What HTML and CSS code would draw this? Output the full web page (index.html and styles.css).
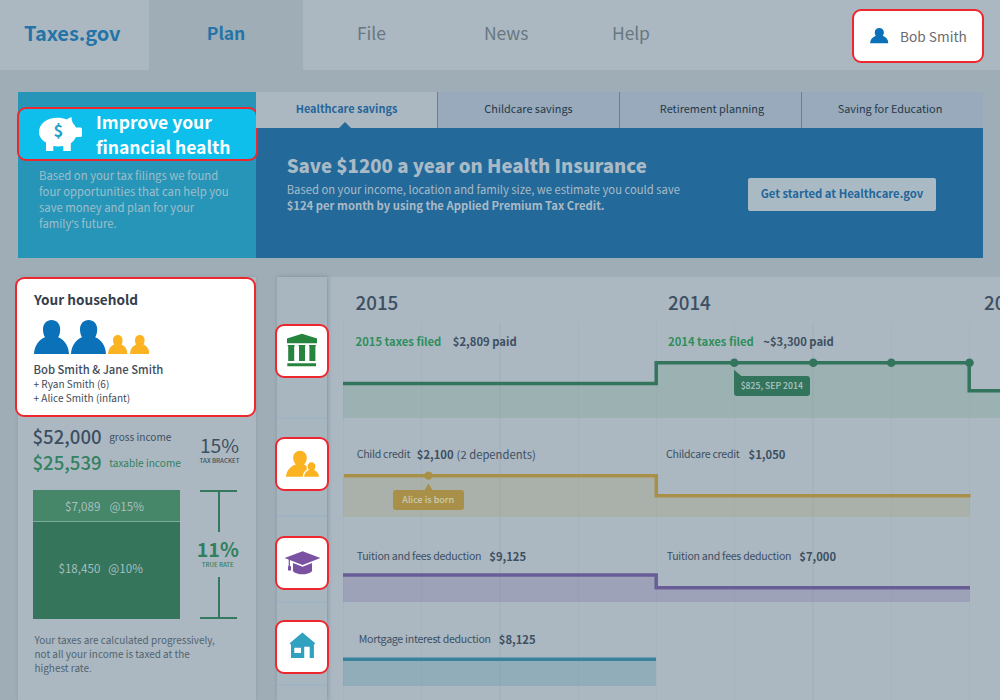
FILE: index.html
```html
<!DOCTYPE html>
<html lang="en">
<head>
<meta charset="utf-8">
<title>Taxes.gov</title>
<link rel="stylesheet" href="styles.css">
</head>
<body>
<svg class="defs" width="0" height="0">
  <symbol id="person" viewBox="0 0 35 34" preserveAspectRatio="none">
    <path d="M17.6 0C22.6 0 26.2 3.8 26.2 9.2C26.2 12.600 25.400 15.200 24.200 17.200C30.400 19.800 34.600 25.600 35 34H0C.4 25.600 4.800 19.800 11 17.200C9.800 15.200 9 12.600 9 9.200C9 3.800 12.600 0 17.600 0Z"/>
  </symbol>
</svg>

<header class="top">
  <div class="logo">Taxes.gov</div>
  <nav class="nav">
    <a class="nav-plan">Plan</a>
    <a class="nav-file">File</a>
    <a class="nav-news">News</a>
    <a class="nav-help">Help</a>
  </nav>
  <div class="mark user">
    <svg class="user-icon"><use href="#person"/></svg>
    <span>Bob Smith</span>
  </div>
</header>

<section class="banner">
  <div class="promo">
    <div class="mark promo-title">
      <svg width="43" height="34" viewBox="0 0 43 34">
        <path fill="#fff" d="M0 15C0 6.500 8 .8 18.500 .8C22 .8 25 1.300 27.700 2.500C29 1.600 30.800 .6 32.400 0C32.700 2.200 33 4.200 33.800 6C35.200 7.400 36.300 8.900 37 10.500H41.500Q43 10.500 43 12V18.500Q43 20 41.500 20H37C35.800 22.600 34 24.600 31.800 26.200V34H24.300V29C20.500 29.600 17.500 29.600 14.300 29V34H7V25.500C2.500 23 0 19.400 0 15Z"/>
        <text class="pig-sign" x="19.300" y="20" text-anchor="middle">$</text>
      </svg>
      <h1>Improve your<br>financial health</h1>
    </div>
    <p>Based on your tax filings we found<br>four opportunities that can help you<br>save money and plan for your<br>family<span class="apos">’</span>s future.</p>
  </div>
  <div class="offers">
    <div class="tabs">
      <div class="tab active">Healthcare savings</div>
      <div class="tab">Childcare savings</div>
      <div class="tab tab-retire">Retirement planning</div>
      <div class="tab">Saving for Education</div>
    </div>
    <div class="offer">
      <div>
        <h2>Save $1200 a year on Health Insurance</h2>
        <p>Based on your income, location and family size, we estimate you could save</p>
        <p><b>$124 per month by using the Applied Premium Tax Credit.</b></p>
      </div>
      <a class="cta">Get started at Healthcare.gov</a>
    </div>
  </div>
</section>

<main class="main">
  <aside class="side">
    <div class="mark household">
      <h3>Your household</h3>
      <div class="family">
        <svg class="adult"><use href="#person"/></svg>
        <svg class="adult"><use href="#person"/></svg>
        <svg class="kid"><use href="#person"/></svg>
        <svg class="kid"><use href="#person"/></svg>
      </div>
      <p class="names">Bob Smith &amp; Jane Smith</p>
      <p>+ Ryan Smith (6)</p>
      <p>+ Alice Smith (infant)</p>
    </div>
    <div class="income">
      <div class="sums">
        <div class="sum"><strong>$52,000</strong><span>gross income</span></div>
        <div class="sum taxable"><strong>$25,539</strong><span>taxable income</span></div>
      </div>
      <div class="rate"><div class="pct">15%</div><div class="cap">TAX BRACKET</div></div>
    </div>
    <div class="breakdown">
      <div class="bars">
        <div class="bar upper"><span>$7,089</span><span>@15%</span></div>
        <div class="bar lower"><span>$18,450</span><span>@10%</span></div>
      </div>
      <div class="true-rate">
        <div class="tee tee-top"></div>
        <div class="true-label"><div class="pct">11%</div><div class="cap">TRUE RATE</div></div>
        <div class="tee tee-bottom"></div>
      </div>
    </div>
    <p class="note">Your taxes are calculated progressively,<br>not all your income is taxed at the<br>highest rate.</p>
  </aside>

  <section class="timeline">
    <div class="rail">
      <div class="slot slot-tax"><div class="mark tile">
        <svg viewBox="0 0 50 50" fill="#26843e"><path d="M25 7.800L40 12.600V17.300H10V12.600ZM11.200 19H17.200V35H11.200ZM22 19H28V35H22ZM32.400 19H38.400V35H32.400ZM10.300 37.200H39V40.300H10.300Z"/><path d="M10.700 19H17.600V20.200H10.700ZM21.600 19H28.400V20.200H21.600ZM32 19H38.800V20.200H32Z"/></svg>
      </div></div>
      <div class="slot slot-child"><div class="mark tile">
        <svg viewBox="0 0 50 50" fill="#fcb322"><path d="M23 11.800C27 11.800 29.800 14.800 29.800 19C29.800 21.800 28.600 24 27 25.600C28.400 26.200 29.200 26.600 30 27.200L32 31L27 37.800H9C9.400 32 12.800 27.400 18.800 25.400C17.200 23.800 16.200 21.600 16.200 19C16.200 14.800 19 11.800 23 11.800Z"/><path stroke="#fff" stroke-width="2.400" paint-order="stroke" d="M34.500 23.200C36.800 23.200 38.400 25 38.400 27.300C38.400 28.800 37.900 30 37 31C39.800 32 41.800 34.400 42 37.800H27C27.200 34.400 29.200 32 32 31C31.100 30 30.600 28.800 30.600 27.300C30.600 25 32.200 23.200 34.500 23.200Z"/><path fill="#fff" d="M8 37.900H43V40H8Z"/></svg>
      </div></div>
      <div class="slot slot-study"><div class="mark tile">
        <svg viewBox="0 0 50 50" fill="#7a52a1"><path d="M25.600 13.200L43.400 20L25.600 27L7.600 20Z"/><path d="M16 25L25.600 28.800L35 25V33.200C32.800 35.400 29.200 36.300 25.500 36.300S18.200 35.400 16 33.200Z"/><path d="M11.700 20.800H12.900V27.400C13.800 27.900 14 28.500 14 29.300V32.400H11V29.300C11 28.500 11.200 27.900 11.700 27.400Z"/></svg>
      </div></div>
      <div class="slot slot-home"><div class="mark tile">
        <svg viewBox="0 0 50 50" fill="#31a1c0"><path fill-rule="evenodd" d="M25.400 10.600L38.200 21.200L37.400 22.400H36.900V36H32.700V24.800H27.200V36H14V22.400H13.600L12.700 21.200ZM17.300 25.700V31H24V25.700Z"/></svg>
      </div></div>
    </div>

    <div class="chart">
      <div class="years"><span>2015</span><span>2014</span><span>2013</span></div>
      <div class="track track-tax">
        <div class="labels">
          <div><b class="filed">2015 taxes filed</b><b>$2,809 paid</b></div>
          <div><b class="filed">2014 taxes filed</b><b>~$3,300 paid</b></div>
        </div>
        <svg class="plot" width="657" height="63" viewBox="343 355 657 63">
          <path fill="#3a8a50" fill-opacity=".13" d="M343 383.600H656V362.700H969V390.600H1000V418H343Z"/>
          <path class="line" stroke="#33755c" d="M343 383.600H656.200V362.700H969.200V390.700H1000"/>
          <g fill="#33755c"><circle cx="734.300" cy="362.700" r="4.300"/><circle cx="813.300" cy="362.700" r="4.300"/><circle cx="891.300" cy="362.700" r="4.300"/><circle cx="969.500" cy="362.700" r="4.300"/><path d="M734 369.800L742.500 377H734Z"/></g>
        </svg>
        <div class="tip tip-paid">$825, SEP 2014</div>
      </div>
      <div class="track track-child">
        <div class="labels">
          <div><span>Child credit</span><b>$2,100</b><i>(2 dependents)</i></div>
          <div><span>Childcare credit</span><b>$1,050</b></div>
        </div>
        <svg class="plot" width="657" height="49" viewBox="343 468 657 49">
          <path fill="#a99650" fill-opacity=".2" d="M343 475.700H656V495.700H970V517H343Z"/>
          <path class="line" stroke="#a99048" d="M344 475.700H656.300V495.700H970.500"/>
          <g fill="#a99048"><circle cx="428.500" cy="475.600" r="4.200"/><path d="M428.500 483.500L433 491H424Z"/></g>
        </svg>
        <div class="tip tip-born">Alice is born</div>
      </div>
      <div class="track track-study">
        <div class="labels">
          <div><span>Tuition and fees deduction</span><b>$9,125</b></div>
          <div><span>Tuition and fees deduction</span><b>$7,000</b></div>
        </div>
        <svg class="plot" width="657" height="35" viewBox="343 567 657 35">
          <path fill="#704a90" fill-opacity=".2" d="M343 575H656V587.700H970V602H343Z"/>
          <path class="line" stroke="#685d96" d="M343 575H656.200V587.700H970"/>
        </svg>
      </div>
      <div class="track track-home">
        <div class="labels">
          <div><span>Mortgage interest deduction</span><b>$8,125</b></div>
        </div>
        <svg class="plot" width="657" height="36" viewBox="343 650 657 36">
          <path fill="#2e8098" fill-opacity=".2" d="M343 659.300H656V686H343Z"/>
          <path class="line" stroke="#38829e" d="M343 659.300H656"/>
        </svg>
      </div>
    </div>
  </section>
</main>
</body>
</html>
```
FILE: styles.css
```css
* { box-sizing: border-box; }
body {
  margin: 0; width: 1000px; height: 700px; overflow: hidden;
  display: flex; flex-direction: column;
  background: #9fadb6; color: #3d4f61;
  font-family: "Noto Sans CJK SC", "Open Sans", sans-serif;
}
h1, h2, h3, p { margin: 0; font-weight: 400; white-space: nowrap; }
svg { display: block; flex: none; }
.defs { position: absolute; }
i { font-style: normal; }
.mark { border: 2px solid #ee272e; border-radius: 9px; background: #fff; }

/* Header */
.top { display: flex; height: 70px; flex: none; background: #abb8c2; line-height: 65px; }
.logo { width: 149px; padding-left: 24px; font-size: 20px; font-weight: 700; letter-spacing: -.05px; color: #2474a8; }
.nav { display: flex; font-size: 17.500px; color: #687781; letter-spacing: -.1px; }
.nav-plan { width: 154px; height: 71px; background: #9fadb6; color: #2474a8; font-weight: 700; text-align: center; }
.nav-file { padding-left: 54px; width: 181px; }
.nav-news { width: 128px; }
.user { display: flex; align-items: center; width: 132px; height: 54px; margin: 9px 16px 0 auto; padding-left: 16px; gap: 11.500px; font-size: 13.700px; line-height: 20px; color: #6b6c6e; white-space: nowrap; }
.user-icon { width: 18.500px; height: 15.500px; fill: #0b71b9; }
.user span { margin-top: -1px; }

/* Savings banner */
.banner { display: flex; flex: none; height: 166px; margin: 22px 17px 0 18px; }
.promo { width: 238px; background: #2795b7; }
.promo-title { position: relative; display: flex; width: 241px; height: 54px; margin: 15px 0 0 -1px; padding-left: 20px; gap: 14px; background: #0fbfeb; color: #fff; }
.promo-title svg { margin-top: 8px; }
.promo-title h1 { font-size: 17.500px; line-height: 25px; font-weight: 700; margin-top: -.500px; }
.pig-sign { font-size: 16.500px; font-weight: 700; fill: #1ea3cb; }
.promo p { padding: 6px 0 0 21px; font-size: 11.300px; line-height: 16px; color: #9fbecb; }
.apos { font-family: "Noto Sans", sans-serif; }
.offers { flex: 1; display: flex; flex-direction: column; background: #236a9b; color: #a9bac6; }
.tabs { display: grid; grid-template-columns: 182px 182px 182px 1fr; height: 36px; color: #26394a; }
.tab { background: #98aabb; border-right: 1px solid #5187ac; text-align: center; font-size: 10.900px; line-height: 32px; }
.tab-retire { padding-left: 3px; }
.tab:last-child { border-right: 0; padding-right: 5px; }
.tab.active { position: relative; background: #abb8c2; color: #25669a; font-weight: 700; }
.tab.active::after { content: ""; position: absolute; left: 83px; bottom: 0; border: 6px solid transparent; border-top: 0; border-bottom-color: #236a9b; }
.offer { display: flex; justify-content: space-between; padding: 23px 47px 0 30.700px; }
.offer h2 { font-size: 18.600px; line-height: 27px; font-weight: 900; margin-bottom: 3px; }
.offer p { font-size: 11.250px; line-height: 16px; }
.cta { height: 33px; width: 188px; margin-top: 27px; border-radius: 2px; background: #a9bac5; color: #23669a; font-size: 11.300px; font-weight: 700; line-height: 31px; text-align: center; white-space: nowrap; }

/* Sidebar */
.main { display: flex; flex: none; height: 423px; margin: 19px 0 0 18px; }
.side { width: 238px; margin-right: 21px; background: #abb8c2; box-shadow: 0 0 3px rgba(60, 80, 95, .15); }
.household { width: 241px; height: 140px; margin-left: -3px; padding: 10px 0 0 16.500px; font-size: 10.050px; line-height: 14px; color: #414c5a; }
.household h3 { font-size: 13.600px; font-weight: 700; line-height: 20px; color: #353e4b; margin-left: .5px; }
.family { display: flex; align-items: flex-end; gap: 2px; height: 34px; margin: 11px 0 8px .5px; }
.adult { width: 35px; height: 34px; fill: #0b71b9; }
.kid { width: 19.500px; height: 19px; fill: #fcb322; }
.household .names { font-size: 11.250px; font-weight: 500; margin-bottom: 1px; }
.income { display: flex; justify-content: space-between; align-items: center; padding: 6px 14px 0 14.500px; }
.sum { display: flex; align-items: center; height: 26px; font-size: 10.100px; gap: 7.500px; }
.sum strong { font-size: 18.600px; font-weight: 500; line-height: 26px; }
.taxable { color: #338160; }
.rate { text-align: center; margin-right: 2.500px; }
.pct { font-size: 19.300px; line-height: 20px; margin-top: 1px; }
.cap { font-size: 6.200px; font-weight: 500; line-height: 8px; margin-top: 2px; white-space: nowrap; }
.breakdown { display: flex; height: 129px; margin: 15px 0 0 15px; }
.bars { display: flex; flex-direction: column; width: 147px; gap: 1px; background: #7fa99b; color: #a9bfc0; }
.bar { display: flex; align-items: center; font-size: 11.600px; }
.bar.upper { height: 31px; padding-left: 32px; gap: 9px; background: #468769; }
.bar.lower { flex: 1; padding: 0 0 6px 25.500px; gap: 8px; background: #34755b; }
.true-rate { display: flex; flex-direction: column; width: 37px; margin-left: 20px; color: #327f5f; }
.tee { height: 42px; background: linear-gradient(#34795e, #34795e) 50% / 2px 100% no-repeat; }
.tee-top { border-top: 2px solid #34795e; }
.tee-bottom { border-bottom: 2px solid #34795e; }
.true-label { flex: 1; display: flex; flex-direction: column; align-items: center; padding-top: 5px; margin-left: -1.500px; }
.true-label .pct { font-weight: 700; line-height: 22px; font-size: 19.700px; }
.true-label .cap { font-weight: 500; margin-top: 1px; font-size: 6.100px; }
.note { padding: 14px 0 0 16.500px; font-size: 9.950px; line-height: 14px; color: #52636f; }

/* Timeline */
.timeline { display: flex; flex: 1; min-width: 0; background: #abb8c2; }
.rail { position: relative; width: 50px; background: #a8b6c0; box-shadow: 1px 0 4px rgba(60, 80, 95, .35); }
.slot { border-bottom: 2px solid #a0b3c2; }
.slot-tax { height: 142px; padding-top: 47px; }
.slot-child { height: 98px; padding-top: 18px; }
.slot-study { height: 86px; padding-top: 19px; }
.slot-home { height: 83px; padding-top: 17px; }
.tile { width: 54px; height: 54px; margin-left: -2px; }
.chart {
  flex: 1; min-width: 0; overflow: hidden; padding-left: 16px;
  background: repeating-linear-gradient(90deg, #a5b3bd 0 1px, transparent 1px 78.250px) 16px 45px / 630px 400px no-repeat;
}
.years, .labels { display: grid; grid-template-columns: 313px 313px 60px; }
.years { height: 45px; font-size: 18.800px; font-weight: 500; line-height: 49px; padding-left: 12.500px; }
.years span:nth-child(2) { margin-left: -.5px; }
.years span:nth-child(3) { margin-left: 2.500px; }
.track { position: relative; display: flex; flex-direction: column; justify-content: space-between; }
.track-tax { height: 96px; padding-top: 9px; }
.track-child { height: 99px; padding-top: 26px; }
.track-study { height: 85px; padding-top: 29px; }
.track-home { height: 84px; padding-top: 27px; }
.labels { font-size: 11.250px; line-height: 20px; white-space: nowrap; }
.labels div { display: flex; padding-left: 13.700px; gap: 8px; }
.labels div + div { padding-left: 10.700px; }
.labels span { font-size: 10.600px; letter-spacing: -.27px; }
.track-tax .labels div { padding-left: 12.500px; gap: 11.500px; }
.track-tax .labels div + div { gap: 9.500px; padding-left: 12px; }
.track-child .labels div { gap: 6.500px; }
.track-child .labels div + div { gap: 9px; padding-left: 10px; }
.track-child .labels i { margin-left: -3.500px; }
.track-home .labels div { padding-left: 15.700px; }
.filed { color: #2e8f5c; }
.plot { flex: none; }
.line { fill: none; stroke-width: 3.500; }
.tip { position: absolute; height: 20px; border-radius: 3px; text-align: center; line-height: 19px; color: #b3c4c4; white-space: nowrap; }
.tip-paid { left: 391px; top: 53.500px; width: 75.500px; background: #33755c; border-top-left-radius: 0; font-size: 8.700px; font-weight: 500; }
.tip-born { left: 50px; top: 72px; width: 70.500px; background: #a99048; color: #c9ccb4; font-size: 9px; font-weight: 500; line-height: 20px; }
```
